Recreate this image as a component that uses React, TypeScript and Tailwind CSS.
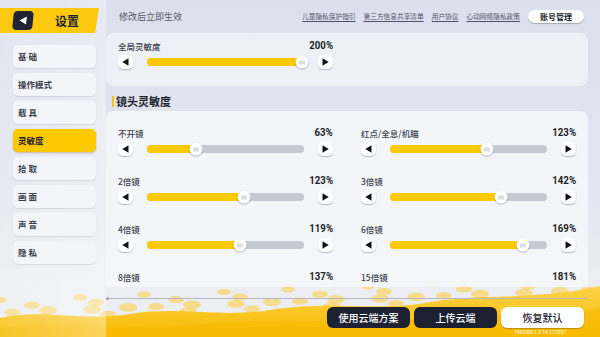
import type { ReactNode } from 'react';

const cjk = { fontFamily: '"Noto Sans CJK SC", "Noto Sans", sans-serif' };
const num = { fontFamily: 'Roboto, "Noto Sans", sans-serif' };

const navItems = ['基 础', '操作模式', '载 具', '灵敏度', '拾 取', '画 面', '声 音', '隐 私'];

const links = ['儿童隐私保护指引', '第三方信息共享清单', '用户协议', '心动网络隐私政策'];

const scopes: { label: string; value: number }[] = [
  { label: '不开镜', value: 63 },
  { label: '红点/全息/机瞄', value: 123 },
  { label: '2倍镜', value: 123 },
  { label: '3倍镜', value: 142 },
  { label: '4倍镜', value: 119 },
  { label: '6倍镜', value: 169 },
  { label: '8倍镜', value: 137 },
  { label: '15倍镜', value: 181 },
];

function Triangle({ dir }: { dir: 'left' | 'right' }) {
  return (
    <svg width="7" height="8" viewBox="0 0 7 8">
      {dir === 'left' ? <path d="M6.5 0.3 L6.5 7.7 L0.3 4 Z" fill="#12141c" /> : <path d="M0.5 0.3 L0.5 7.7 L6.7 4 Z" fill="#12141c" />}
    </svg>
  );
}

function ArrowButton({ dir }: { dir: 'left' | 'right' }) {
  return (
    <button className="flex h-[14px] w-[15px] shrink-0 items-center justify-center rounded-[5px] bg-white shadow-[0_1px_1px_rgba(70,78,100,0.35)]">
      <Triangle dir={dir} />
    </button>
  );
}

function Slider({ value }: { value: number }) {
  const pct = Math.min(value / 200, 1) * 100;
  return (
    <div className="mt-[2px] flex h-4 items-center">
      <ArrowButton dir="left" />
      <div className="relative mx-[14px] h-[8px] flex-1 rounded-full bg-[#c6cad4]">
        <div className="h-full rounded-full bg-[#fcc800]" style={{ width: `${pct}%` }} />
        <div
          className="absolute top-1/2 flex h-[13px] w-[13px] -translate-x-1/2 -translate-y-1/2 items-center justify-center gap-[1px] rounded-full bg-white shadow-[0_1px_2px_rgba(0,0,0,0.25)]"
          style={{ left: `${Math.min(pct, 98.5)}%` }}
        >
          <span className="h-[4px] w-[1px] bg-[#b9bdc6]" />
          <span className="h-[4px] w-[1px] bg-[#b9bdc6]" />
          <span className="h-[4px] w-[1px] bg-[#b9bdc6]" />
        </div>
      </div>
      <ArrowButton dir="right" />
    </div>
  );
}

function SettingRow({ label, value }: { label: string; value: number }) {
  return (
    <div className="w-[215px]">
      <div className="flex h-[12px] items-center justify-between">
        <span className="text-[8.5px] font-medium text-[#3b404c]" style={cjk}>
          {label}
        </span>
        <span className="inline-block origin-right scale-x-[0.88] text-[11px] font-bold text-[#1b1f2b]" style={num}>
          {value}%
        </span>
      </div>
      <Slider value={value} />
    </div>
  );
}

function DarkButton({ children, light }: { children: ReactNode; light?: boolean }) {
  return (
    <button
      className={
        light
          ? 'flex h-[21px] w-[83px] items-center justify-center rounded-[6px] bg-white text-[10px] font-medium text-[#1c2232] shadow-[0_1px_1px_rgba(0,0,0,0.25)]'
          : 'flex h-[21px] w-[83px] items-center justify-center rounded-[6px] bg-[#1c2232] text-[10px] font-medium text-white'
      }
      style={cjk}
    >
      {children}
    </button>
  );
}

function Backdrop() {
  const dots: [number, number, number][] = [];
  for (let i = 0; i < 26; i++) {
    const x = i * 24 + (i % 2) * 8;
    const y = 300 - i * 0.9 + (i % 3) * 6;
    dots.push([x, y, 5 + (i % 3)]);
    dots.push([x + 12, y + 12, 6 + (i % 2)]);
  }
  return (
    <svg className="pointer-events-none absolute inset-0" width="600" height="337" viewBox="0 0 600 337" aria-hidden>
      <defs>
        <linearGradient id="y" x1="0" y1="0" x2="0" y2="1">
          <stop offset="0" stopColor="#fbd24a" />
          <stop offset="1" stopColor="#f8bc00" />
        </linearGradient>
      </defs>
      {dots.map(([x, y, r], i) => (
        <ellipse key={i} cx={x} cy={y} rx={r + 2} ry={r * 0.6} fill="#f9d56a" opacity={0.75} />
      ))}
      <path
        d="M0 318 C40 308 80 322 130 314 C180 306 220 318 270 310 C330 300 380 312 430 302 C480 294 540 300 600 286 L600 337 L0 337 Z"
        fill="url(#y)"
      />
      <path
        d="M0 328 C60 320 120 332 200 324 C280 316 360 326 440 318 C500 312 560 316 600 308 L600 337 L0 337 Z"
        fill="#f7b900"
        opacity={0.6}
      />
    </svg>
  );
}

export default function App() {
  return (
    <div className="relative h-[337px] w-[600px] overflow-hidden bg-[linear-gradient(180deg,#dce0ed_0%,#e3e6f0_60%,#eceef3_85%)]" style={cjk}>
      <Backdrop />
      <div className="relative flex h-full">
        {/* sidebar */}
        <div className="flex w-[106px] shrink-0 flex-col bg-[linear-gradient(90deg,rgba(255,255,255,0.15),rgba(255,255,255,0.35))] pt-[8px]">
          <div className="flex h-[25px] w-[99px] items-center bg-[#fcc90f] pl-[13px] [clip-path:polygon(0_0,100%_0,96%_100%,0_100%)]">
            <div className="flex h-[19px] w-[20px] -skew-x-6 items-center justify-center rounded-[4px] bg-[#1f2533]">
              <svg width="8" height="9" viewBox="0 0 8 9">
                <path d="M7.5 0.5 L7.5 8.5 L0.5 4.5 Z" fill="#ffffff" />
              </svg>
            </div>
            <span className="ml-[22px] text-[12px] font-bold text-[#1b1f2b]">设置</span>
          </div>
          <nav className="mt-[12px] flex flex-col gap-[5px] pl-[13px]">
            {navItems.map((item) => (
              <div
                key={item}
                className={
                  item === '灵敏度'
                    ? 'flex h-[23px] w-[83px] items-center rounded-[5px] bg-[#fcc800] pl-[5px] text-[8.5px] font-bold text-[#1f2330] shadow-[0_1px_2px_rgba(120,90,0,0.35)]'
                    : 'flex h-[23px] w-[83px] items-center rounded-[5px] bg-[#f3f5fa] pl-[5px] text-[8.5px] font-bold text-[#3b3f4a] shadow-[0_1px_1px_rgba(80,90,120,0.15)]'
                }
              >
                {item}
              </div>
            ))}
          </nav>
        </div>

        {/* main */}
        <div className="flex w-[482px] flex-col">
          <div className="flex h-[33px] items-center">
            <span className="pl-[13px] text-[9px] text-[#555a66]">修改后立即生效</span>
            <div className="ml-auto flex items-center gap-[8px]">
              {links.map((l) => (
                <span key={l} className="text-[6.7px] text-[#4e5466] underline underline-offset-[1.5px]">
                  {l}
                </span>
              ))}
            </div>
            <button className="ml-[8px] mr-[4px] flex h-[13px] w-[56px] items-center justify-center rounded-full bg-white text-[8px] font-bold text-[#1b1f2b] shadow-[0_1px_1px_rgba(0,0,0,0.25)]">
              账号管理
            </button>
          </div>

          <div className="h-[53px] rounded-[8px] bg-[rgba(240,242,248,0.85)] px-[12px] pt-[7px]">
            <SettingRow label="全局灵敏度" value={200} />
          </div>

          <div className="mt-[8px] mb-[3px] flex h-[14px] items-center pl-[6px]">
            <span className="h-[11px] w-[2px] bg-[#fcc800]" />
            <span className="ml-[2px] text-[11px] font-bold text-[#1b1f2b]">镜头灵敏度</span>
          </div>

          <div className="h-[176px] overflow-hidden">
            <div className="rounded-t-[8px] bg-[rgba(244,246,250,0.92)] px-[12px] pt-[16px] pb-[16px]">
              <div className="grid grid-cols-[215px_215px] gap-x-[28px] gap-y-[18px]">
                {scopes.map((s) => (
                  <SettingRow key={s.label} label={s.label} value={s.value} />
                ))}
              </div>
            </div>
          </div>

          <div className="mt-[11px] flex h-[1px] items-center">
            <span className="h-[3px] w-[3px] rounded-full bg-[#9ea3b0]" />
            <span className="h-[1px] flex-1 bg-[#b3b8c5]" />
          </div>

          <div className="mt-[8px] mr-[4px] flex justify-end gap-[4px]">
            <DarkButton>使用云端方案</DarkButton>
            <DarkButton>上传云端</DarkButton>
            <DarkButton light>恢复默认</DarkButton>
          </div>
          <div className="mr-[22px] mt-[2px] text-right text-[5px] leading-[5px] text-white/90" style={num}>
            FN0000-1.2.14.117057
          </div>
        </div>
      </div>
    </div>
  );
}
